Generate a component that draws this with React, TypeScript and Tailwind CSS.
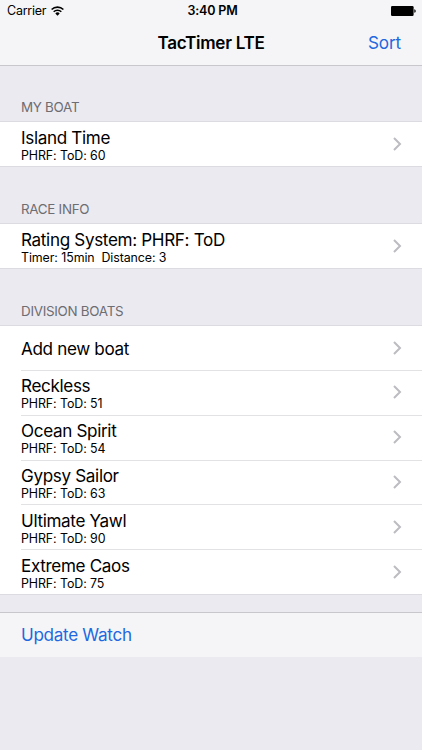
const BOATS = [
  { name: 'Reckless',      rating: 51 },
  { name: 'Ocean Spirit',  rating: 54 },
  { name: 'Gypsy Sailor',  rating: 63 },
  { name: 'Ultimate Yawl', rating: 90 },
  { name: 'Extreme Caos',  rating: 75 },
]

function WifiIcon() {
  return (
    <svg className="w-[13px] h-[10px]" viewBox="0 0 13 10" fill="none" stroke="#000" strokeWidth="1.6">
      <path d="M0.6 3.5a8.4 8.4 0 0 1 11.8 0" />
      <path d="M2.7 5.8a5.4 5.4 0 0 1 7.6 0" />
      <path d="M6.5 9.8 4.3 7.5a3 3 0 0 1 4.4 0z" fill="#000" stroke="none" />
    </svg>
  )
}

function BatteryIcon() {
  return (
    <svg className="w-[25px] h-[10px]" viewBox="0 0 25 10">
      <rect x="0" y="0" width="22.6" height="10" rx="1.2" fill="#000" />
      <path d="M23.3 3.2c1 .2 1.4.9 1.4 1.8s-.4 1.6-1.4 1.8z" fill="#000" />
    </svg>
  )
}

function Chevron() {
  return (
    <svg className="mb-[1px] w-[9px] h-[14px] shrink-0" viewBox="0 0 9 14" fill="none" stroke="#bcbcc1" strokeWidth="2">
      <path d="M1 1l6 6-6 6" />
    </svg>
  )
}

function SectionHeader({ title }: { title: string }) {
  return (
    <h2 className="px-[21px] pb-[6px] text-[13.4px] leading-[18px] tracking-[-0.28px] text-[#6d6d72]">
      {title}
    </h2>
  )
}

function Row({ title, detail }: { title: string; detail?: string }) {
  return (
    <div className="flex h-full items-center justify-between pr-[20px]">
      <div className="whitespace-pre pt-[2px]">
        <p className="text-[17.1px] leading-[20px] tracking-[-0.34px]">{title}</p>
        {detail && <p className="text-[12.4px] leading-[15px] tracking-[-0.08px]">{detail}</p>}
      </div>
      <Chevron />
    </div>
  )
}

export default function App() {
  return (
    <div className="flex h-[750px] w-[422px] flex-col overflow-hidden bg-[#ebeaf0] font-['Inter',sans-serif] text-black">
      <header className="h-[66px] border-b border-[#c8c7cc] bg-[#f5f5f7]">
        <div className="grid h-[22px] grid-cols-3 items-center pl-[7px] pr-[6px] text-[12.5px]">
          <div className="flex items-center gap-[5px]">
            <span className="tracking-[-0.25px]">Carrier</span>
            <WifiIcon />
          </div>
          <span className="pl-[2px] text-center font-semibold tracking-[-0.15px]">3:40 PM</span>
          <div className="flex justify-end">
            <BatteryIcon />
          </div>
        </div>
        <div className="grid h-[42px] grid-cols-[1fr_auto_1fr] items-center px-[21px] text-[17.1px]">
          <span />
          <h1 className="font-semibold tracking-[-0.3px]">TacTimer LTE</h1>
          <button className="text-right tracking-[-0.1px] text-[#2168e0]">Sort</button>
        </div>
      </header>

      <main className="pt-[32px]">
        <SectionHeader title="MY BOAT" />
        <div className="h-[44px] bg-white pl-[21px] shadow-[0_-1px_0_#dcdbe1,0_1px_0_#dcdbe1]">
          <Row title="Island Time" detail="PHRF: ToD: 60" />
        </div>

        <div className="pt-[34px]">
          <SectionHeader title="RACE INFO" />
          <div className="h-[44px] bg-white pl-[21px] shadow-[0_-1px_0_#dcdbe1,0_1px_0_#dcdbe1]">
            <Row title="Rating System: PHRF: ToD" detail="Timer: 15min  Distance: 3" />
          </div>
        </div>

        <div className="pt-[34px]">
          <SectionHeader title="DIVISION BOATS" />
          <div className="bg-white pl-[21px] shadow-[0_-1px_0_#dcdbe1,0_1px_0_#dcdbe1]">
            <div className="h-[44px]">
              <Row title="Add new boat" />
            </div>
            {BOATS.map(b => (
              <div key={b.name} className="h-[44.8px] border-t border-[#e2e2e4]">
                <Row title={b.name} detail={`PHRF: ToD: ${b.rating}`} />
              </div>
            ))}
          </div>
        </div>
      </main>

      <footer className="mt-[18px] flex h-[45px] items-center border-t border-[#c8c7cc] bg-[#f5f5f7] px-[21px] text-[17.1px]">
        <button className="tracking-[-0.3px] text-[#2168e0]">Update Watch</button>
      </footer>
    </div>
  )
}
